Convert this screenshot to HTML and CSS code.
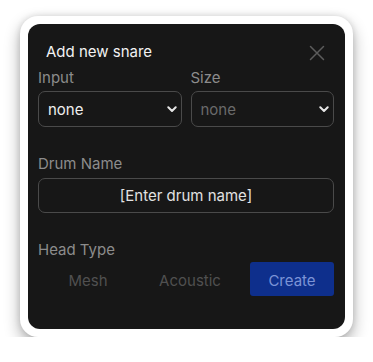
FILE: index.html
```html
<!DOCTYPE html>
<html>
<head>
<meta charset="utf-8">
<link rel="stylesheet" href="styles.css">
</head>
<body>
<div class="stage">
  <div class="card">
    <div class="panel">
      <div class="title-row">
        <div class="title">Add new snare</div>
        <button class="close" aria-label="Close">
          <svg width="16" height="16" viewBox="0 0 16 16"><path d="M1.5 1.5 L14.5 14.5 M14.5 1.5 L1.5 14.5" stroke="#5c5c5c" stroke-width="1.5" stroke-linecap="round" fill="none"/></svg>
        </button>
      </div>
      <div class="row2">
        <div class="field">
          <div class="label">Input</div>
          <div class="select"><span>none</span>
            <svg class="chev" width="10" height="7" viewBox="0 0 10 7"><path d="M1.3 1.3 L5 5 L8.7 1.3" stroke="#e6e6e6" stroke-width="2" fill="none" stroke-linecap="round" stroke-linejoin="round"/></svg>
          </div>
        </div>
        <div class="field">
          <div class="label">Size</div>
          <div class="select dim"><span>none</span>
            <svg class="chev" width="10" height="7" viewBox="0 0 10 7"><path d="M1.3 1.3 L5 5 L8.7 1.3" stroke="#e6e6e6" stroke-width="2" fill="none" stroke-linecap="round" stroke-linejoin="round"/></svg>
          </div>
        </div>
      </div>
      <div class="label gap">Drum Name</div>
      <div class="textbox">[Enter drum name]</div>
      <div class="label gap">Head Type</div>
      <div class="buttons">
        <div class="opt mesh">Mesh</div>
        <div class="opt acoustic">Acoustic</div>
        <div class="create">Create</div>
      </div>
    </div>
  </div>
</div>
</body>
</html>
```
FILE: styles.css
```css
html, body {
  margin: 0;
  padding: 0;
  background: #ffffff;
}
body {
  font-family: Inter, "Noto Sans", sans-serif;
  font-size: 15px;
  line-height: 20px;
}
.stage {
  padding: 16px 0 0 20px;
}
.card {
  width: 333px;
  height: 321px;
  box-sizing: border-box;
  background: #ffffff;
  border-radius: 18px;
  padding: 8px;
  box-shadow: 0 7px 16px rgba(0,0,0,0.32), 0 0 6px rgba(0,0,0,0.12);
}
.panel {
  height: 100%;
  box-sizing: border-box;
  background: #171717;
  border-radius: 12px;
  padding: 18px 11px 0 10px;
}
.title-row {
  display: flex;
  justify-content: space-between;
  align-items: center;
}
.title {
  color: #f2f2f2;
  padding-left: 8px;
}
.close {
  background: none;
  border: none;
  padding: 0;
  margin-right: 9px;
  width: 16px;
  height: 16px;
  display: flex;
  margin-top: 2px;
}
.row2 {
  display: flex;
  gap: 9px;
  margin-top: 6px;
}
.field {
  flex: 1;
}
.label {
  color: #8c8c8c;
}
.label.gap {
  margin-top: 27px;
}
.select {
  margin-top: 3px;
  height: 36px;
  box-sizing: border-box;
  border: 1px solid #4a4a4a;
  border-radius: 7px;
  display: flex;
  align-items: center;
  justify-content: space-between;
  padding: 0 4px 0 9px;
  color: #eeeeee;
}
.select.dim {
  color: #6a6a6a;
}
.select span {
  padding-top: 2px;
}
.textbox {
  margin-top: 4px;
  height: 35px;
  box-sizing: border-box;
  border: 1px solid #4a4a4a;
  border-radius: 7px;
  display: flex;
  align-items: center;
  justify-content: center;
  color: #e2e2e2;
}
.buttons {
  display: flex;
  margin-top: 2px;
  height: 34px;
}
.opt {
  display: flex;
  align-items: center;
  justify-content: center;
  color: #505050;
  padding-top: 3px;
}
.mesh {
  width: 100px;
}
.acoustic {
  width: 104px;
}
.create {
  margin-left: auto;
  width: 84px;
  background: #0e2f8c;
  border-radius: 3px;
  color: #7b93d6;
  display: flex;
  align-items: center;
  justify-content: center;
  padding-top: 3px;
  box-sizing: border-box;
}
```
